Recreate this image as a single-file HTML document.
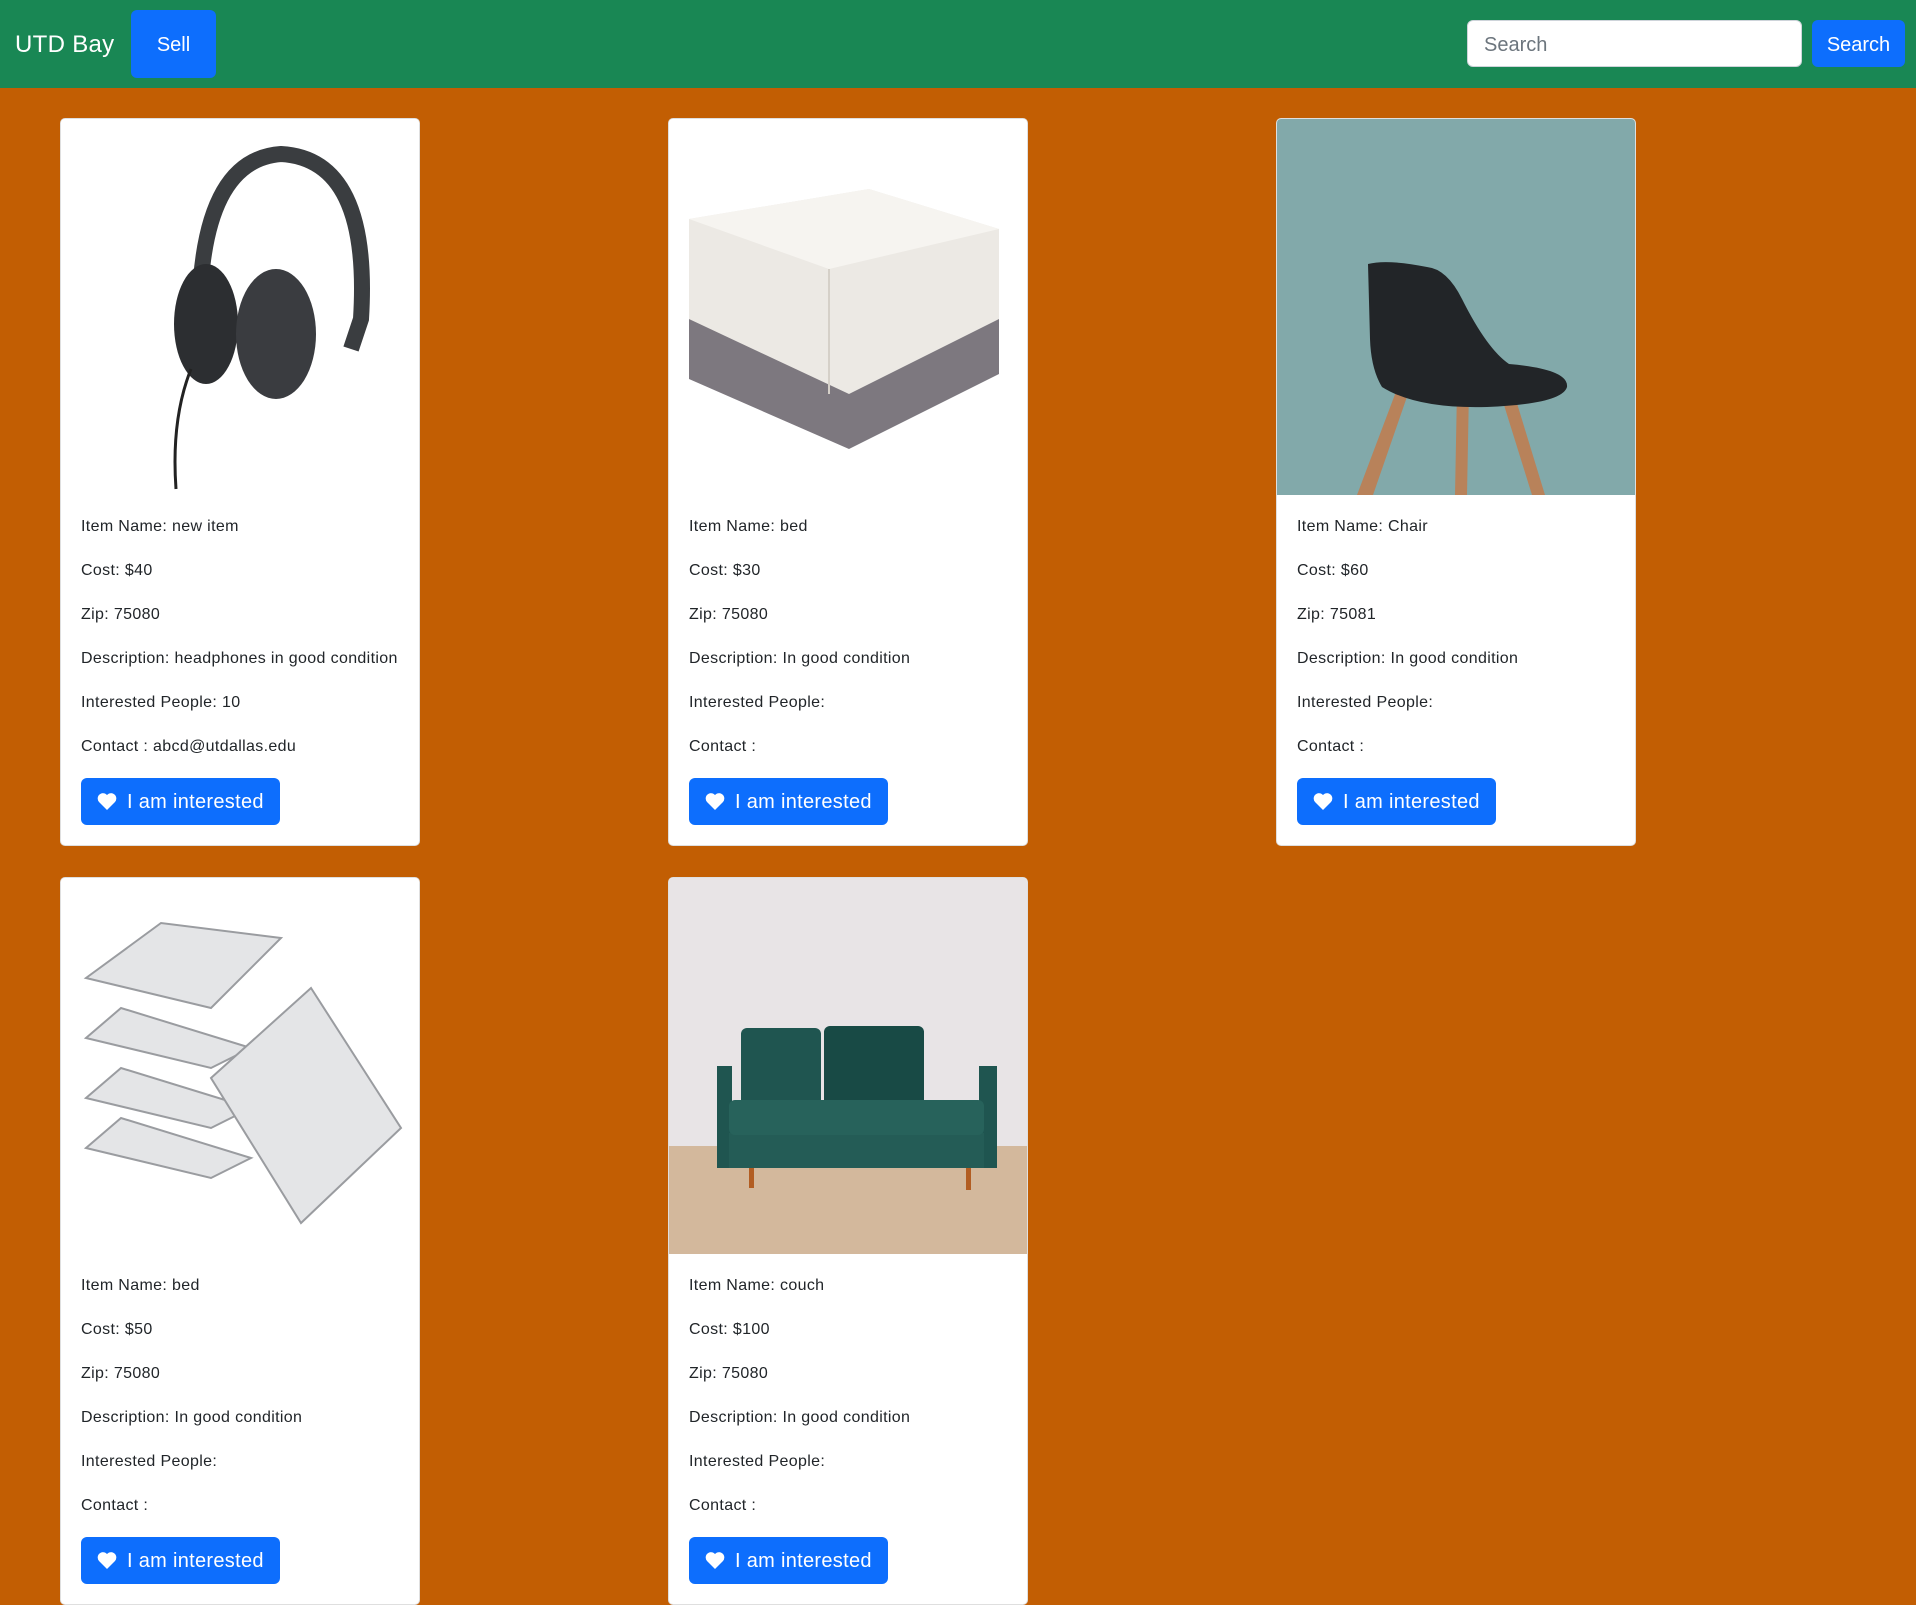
<!DOCTYPE html>
<html><head><meta charset="utf-8"><style>
*{box-sizing:border-box;margin:0;padding:0}
body{width:1916px;height:1605px;background:#c25e03;font-family:"Liberation Sans",sans-serif;position:relative;overflow:hidden}
.nav{position:absolute;left:0;top:0;width:1916px;height:88px;background:#198754}
.brand{position:absolute;left:15px;top:31px;color:#fff;font-size:24px;letter-spacing:.3px}
.sell{position:absolute;left:131px;top:10px;width:85px;height:68px;background:#0d6efd;border-radius:6px;color:#fff;font-size:20px;text-align:center;line-height:70px}
.sin{position:absolute;left:1467px;top:20px;width:335px;height:47px;background:#fff;border-radius:6px;border:1px solid #ced4da;color:#6c757d;font-size:20px;padding-left:16px;line-height:49px}
.sbt{position:absolute;left:1812px;top:20px;width:93px;height:47px;background:#0d6efd;border-radius:6px;color:#fff;font-size:20px;text-align:center;line-height:50px}
.card{position:absolute;width:360px;height:728px;background:#fff;border-radius:5px;overflow:hidden;border:1px solid rgba(0,0,0,.125)}
.card svg{display:block;width:360px;height:376px}
.body{position:absolute;left:20px;top:379px}
.body p{font-size:16px;letter-spacing:.35px;color:#212529;height:44px;line-height:44px}
.body p:first-child{margin-top:7px}
.btn{position:absolute;left:20px;top:659px;width:199px;height:47px;background:#0d6efd;border-radius:6px;color:#fff;font-size:20px;letter-spacing:.3px;line-height:49px;padding-left:46px}
.btn svg{position:absolute;left:16px;top:14px;width:20px;height:18px}
</style></head><body>
<div class="nav"><div class="brand">UTD Bay</div><div class="sell">Sell</div><div class="sin">Search</div><div class="sbt">Search</div></div>

<div class="card" style="left:60px;top:118px">
<svg viewBox="0 0 360 376"><rect width="360" height="376" fill="#fff"/>
<path d="M140 160 Q150 40 220 35 Q310 40 300 200 L290 230" fill="none" stroke="#3a3d40" stroke-width="16"/>
<ellipse cx="145" cy="205" rx="32" ry="60" fill="#2c2e31"/><ellipse cx="215" cy="215" rx="40" ry="65" fill="#3a3c40"/>
<path d="M130 250 Q110 300 115 370" fill="none" stroke="#222" stroke-width="3"/></svg>
<div class="body"><p>Item Name: new item</p><p>Cost: $40</p><p>Zip: 75080</p><p>Description: headphones in good condition</p><p>Interested People: 10</p><p>Contact : abcd@utdallas.edu</p></div>
<div class="btn"><svg viewBox="0 0 20 18"><path d="M10 18 L2 10 A5 5 0 0 1 10 3 A5 5 0 0 1 18 10 Z" fill="#fff"/></svg>I am interested</div></div>

<div class="card" style="left:668px;top:118px">
<svg viewBox="0 0 360 376"><rect width="360" height="376" fill="#fff"/>
<path d="M20 170 L20 260 L180 330 L330 255 L330 170 Z" fill="#7d787f"/>
<path d="M20 100 L200 70 L330 110 L330 200 L180 275 L20 200 Z" fill="#ece9e4"/>
<path d="M20 100 L200 70 L330 110 L160 150Z" fill="#f6f4f0"/>
<path d="M160 150 L160 275" stroke="#d5d0c8" stroke-width="2"/></svg>
<div class="body"><p>Item Name: bed</p><p>Cost: $30</p><p>Zip: 75080</p><p>Description: In good condition</p><p>Interested People:</p><p>Contact :</p></div>
<div class="btn"><svg viewBox="0 0 20 18"><path d="M10 18 L2 10 A5 5 0 0 1 10 3 A5 5 0 0 1 18 10 Z" fill="#fff"/></svg>I am interested</div></div>

<div class="card" style="left:1276px;top:118px">
<svg viewBox="0 0 360 376"><rect width="360" height="376" fill="#82a9aa"/>
<path d="M80 376 L120 270 L132 272 L96 376Z M178 376 L180 270 L192 270 L190 376Z M268 376 L235 268 L222 270 L255 376Z" fill="#b8825a"/>
<path d="M91 145 Q110 140 150 148 Q170 150 185 180 Q210 230 232 245 Q292 250 290 268 Q285 285 210 288 Q140 290 105 268 Q94 250 93 220 Z" fill="#222528"/></svg>
<div class="body"><p>Item Name: Chair</p><p>Cost: $60</p><p>Zip: 75081</p><p>Description: In good condition</p><p>Interested People:</p><p>Contact :</p></div>
<div class="btn"><svg viewBox="0 0 20 18"><path d="M10 18 L2 10 A5 5 0 0 1 10 3 A5 5 0 0 1 18 10 Z" fill="#fff"/></svg>I am interested</div></div>

<div class="card" style="left:60px;top:877px">
<svg viewBox="0 0 360 376"><rect width="360" height="376" fill="#fff"/>
<g fill="#e4e5e7" stroke="#9a9ca0" stroke-width="2">
<path d="M25 270 L150 300 L190 280 L60 240Z"/><path d="M25 220 L150 250 L190 230 L60 190Z"/><path d="M25 160 L150 190 L190 170 L60 130Z"/><path d="M25 100 L150 130 L220 60 L100 45Z"/>
<path d="M150 200 L250 110 L340 250 L240 345Z"/></g></svg>
<div class="body"><p>Item Name: bed</p><p>Cost: $50</p><p>Zip: 75080</p><p>Description: In good condition</p><p>Interested People:</p><p>Contact :</p></div>
<div class="btn"><svg viewBox="0 0 20 18"><path d="M10 18 L2 10 A5 5 0 0 1 10 3 A5 5 0 0 1 18 10 Z" fill="#fff"/></svg>I am interested</div></div>

<div class="card" style="left:668px;top:877px">
<svg viewBox="0 0 360 376"><rect width="360" height="376" fill="#e8e4e6"/>
<rect y="268" width="360" height="108" fill="#d3b89c"/>
<rect x="80" y="282" width="5" height="28" fill="#b25d22"/><rect x="297" y="282" width="5" height="30" fill="#b25d22"/>
<rect x="72" y="150" width="80" height="80" rx="6" fill="#1f5550"/><rect x="155" y="148" width="100" height="82" rx="6" fill="#184a45"/>
<rect x="48" y="188" width="15" height="102" fill="#1f5550"/><rect x="310" y="188" width="18" height="102" fill="#1f5550"/>
<rect x="60" y="255" width="255" height="35" fill="#245c56"/>
<rect x="60" y="222" width="255" height="35" rx="6" fill="#27625b"/></svg>
<div class="body"><p>Item Name: couch</p><p>Cost: $100</p><p>Zip: 75080</p><p>Description: In good condition</p><p>Interested People:</p><p>Contact :</p></div>
<div class="btn"><svg viewBox="0 0 20 18"><path d="M10 18 L2 10 A5 5 0 0 1 10 3 A5 5 0 0 1 18 10 Z" fill="#fff"/></svg>I am interested</div></div>
</body></html>
